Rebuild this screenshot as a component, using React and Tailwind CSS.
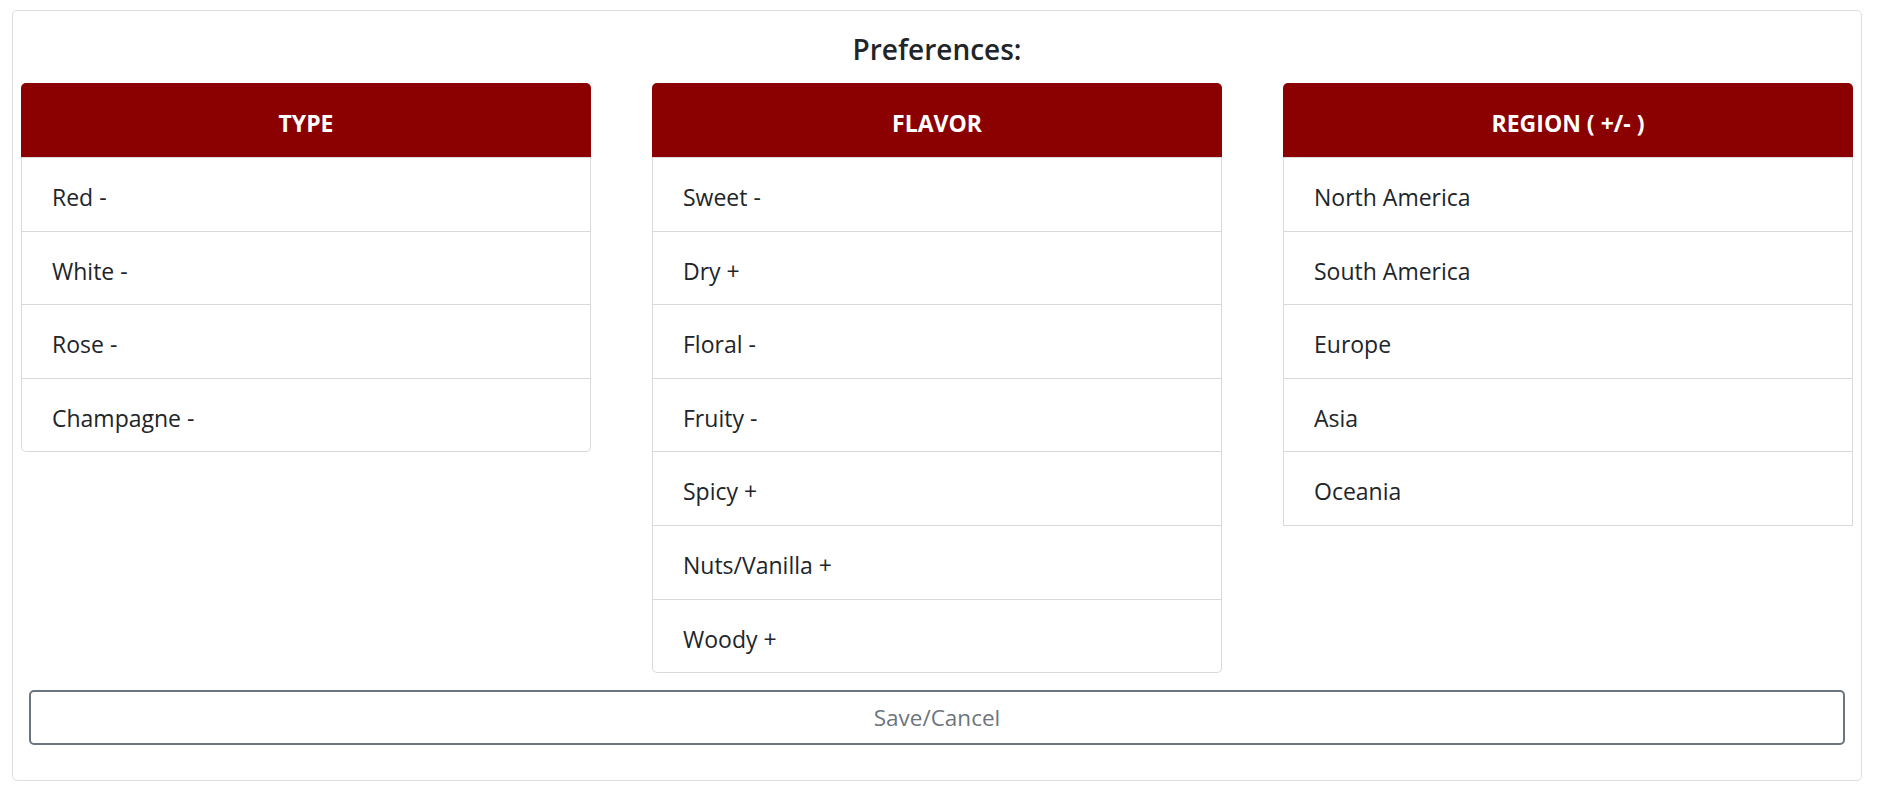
import React from 'react';

const columns = [
  { title: 'TYPE', items: ['Red -', 'White -', 'Rose -', 'Champagne -'], rounded: true },
  {
    title: 'FLAVOR',
    items: ['Sweet -', 'Dry +', 'Floral -', 'Fruity -', 'Spicy +', 'Nuts/Vanilla +', 'Woody +'],
    rounded: true,
  },
  {
    title: 'REGION ( +/- )',
    items: ['North America', 'South America', 'Europe', 'Asia', 'Oceania'],
    rounded: false,
  },
];

function PrefCard({ title, items, rounded }) {
  return (
    <div className="flex flex-col">
      <div className="bg-[#8b0000] text-white font-bold text-[23px] leading-[34px] text-center pt-[23px] pb-[17px] rounded-t-[5px]">
        {title}
      </div>
      <ul className={`border-x border-b border-[#d9d9d9] ${rounded ? 'rounded-b-[5px]' : ''}`}>
        {items.map((item) => (
          <li
            key={item}
            className="border-t border-[#d9d9d9] pl-[30px] pt-[22px] pb-[16.6px] text-[23px] leading-[34px] text-[#212529]"
          >
            {item}
          </li>
        ))}
      </ul>
    </div>
  );
}

export default function App() {
  return (
    <div className="min-h-screen bg-white pl-[12px] pr-[15px] pt-[10px] font-['Open_Sans',sans-serif]">
      <div className="border border-[#dedede] rounded-[5px] px-[8px] pb-[35px]">
        <h4 className="text-center text-[28px] leading-[34px] font-semibold text-[#212529] pt-[21px] mb-[17px]">
          Preferences:
        </h4>

        <div className="grid grid-cols-3 gap-x-[61px] items-start">
          {columns.map((col) => (
            <PrefCard key={col.title} {...col} />
          ))}
        </div>

        <div className="px-[8px] mt-[17px]">
          <button className="w-full h-[55px] flex items-center justify-center border-2 border-[#6c757d] rounded-[5px] text-[#6c757d] text-[22.5px] leading-[34px] bg-white">
            Save/Cancel
          </button>
        </div>
      </div>
    </div>
  );
}
